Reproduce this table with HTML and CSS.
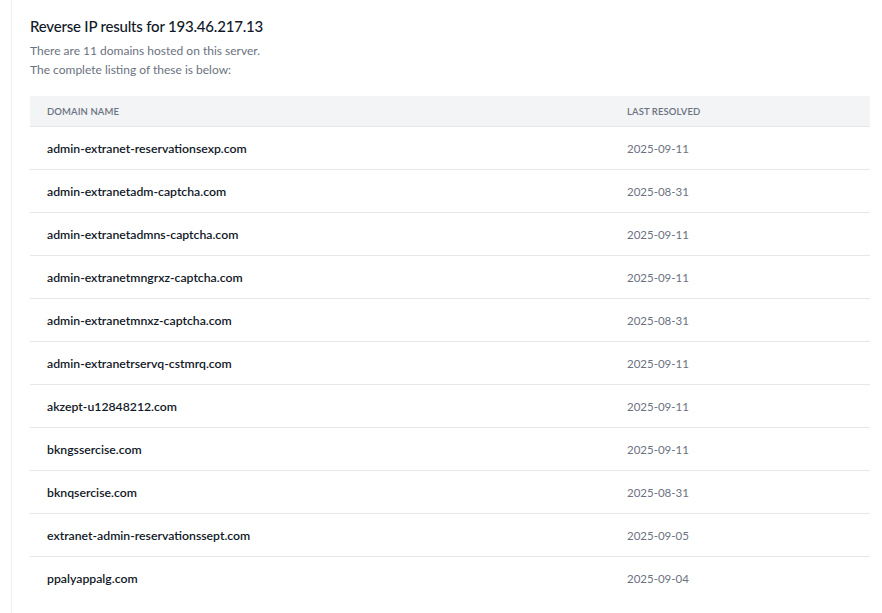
FILE: index.html
```html
<!DOCTYPE html>
<html>
<head>
<meta charset="utf-8">
<link rel="stylesheet" href="styles.css">
</head>
<body>
<main class="panel">
  <h1 class="title">Reverse IP results for 193.46.217.13</h1>
  <p class="lead">There are 11 domains hosted on this server.<br>The complete listing of these is below:</p>
  <table class="results">
    <thead>
      <tr><th class="c-domain">Domain Name</th><th class="c-date">Last Resolved</th></tr>
    </thead>
    <tbody>
      <tr><td class="c-domain">admin-extranet-reservationsexp.com</td><td class="c-date">2025-09-11</td></tr>
      <tr><td class="c-domain">admin-extranetadm-captcha.com</td><td class="c-date">2025-08-31</td></tr>
      <tr><td class="c-domain">admin-extranetadmns-captcha.com</td><td class="c-date">2025-09-11</td></tr>
      <tr><td class="c-domain">admin-extranetmngrxz-captcha.com</td><td class="c-date">2025-09-11</td></tr>
      <tr><td class="c-domain">admin-extranetmnxz-captcha.com</td><td class="c-date">2025-08-31</td></tr>
      <tr><td class="c-domain">admin-extranetrservq-cstmrq.com</td><td class="c-date">2025-09-11</td></tr>
      <tr><td class="c-domain">akzept-u12848212.com</td><td class="c-date">2025-09-11</td></tr>
      <tr><td class="c-domain">bkngssercise.com</td><td class="c-date">2025-09-11</td></tr>
      <tr><td class="c-domain">bknqsercise.com</td><td class="c-date">2025-08-31</td></tr>
      <tr><td class="c-domain">extranet-admin-reservationssept.com</td><td class="c-date">2025-09-05</td></tr>
      <tr><td class="c-domain">ppalyappalg.com</td><td class="c-date">2025-09-04</td></tr>
    </tbody>
  </table>
</main>
</body>
</html>
```
FILE: styles.css
```css
html, body {
  margin: 0;
  padding: 0;
  background: #ffffff;
}
body {
  font-family: Lato, "Noto Sans", sans-serif;
  color: #111827;
}
.panel {
  margin-left: 11px;
  border-left: 1px solid #f0f1f3;
  padding: 15px 12px 12px 18px;
  min-height: 598px;
}
.title {
  margin: 0;
  font-size: 15px;
  font-weight: 500;
  letter-spacing: -0.2px;
  line-height: 22px;
  color: #111827;
}
.lead {
  margin: 4px 0 17px;
  font-size: 12px;
  line-height: 19px;
  color: #6b7280;
}
.results {
  width: 840px;
  border-collapse: collapse;
}
.results th {
  background: #f3f4f6;
  height: 30px;
  padding: 0 17px;
  text-align: left;
  font-size: 9.5px;
  font-weight: 600;
  letter-spacing: 0.1px;
  text-transform: uppercase;
  color: #6b7280;
  border-bottom: 1px solid #e5e7eb;
}
.results td {
  height: 42px;
  padding: 0 17px;
  font-size: 12.25px;
  border-bottom: 1px solid #e5e7eb;
}
.results tr:last-child td {
  border-bottom: none;
}
.c-domain {
  width: 546px;
}
td.c-domain {
  font-weight: 600;
  color: #111827;
}
td.c-date {
  font-size: 11.5px;
  color: #6b7280;
}
```
